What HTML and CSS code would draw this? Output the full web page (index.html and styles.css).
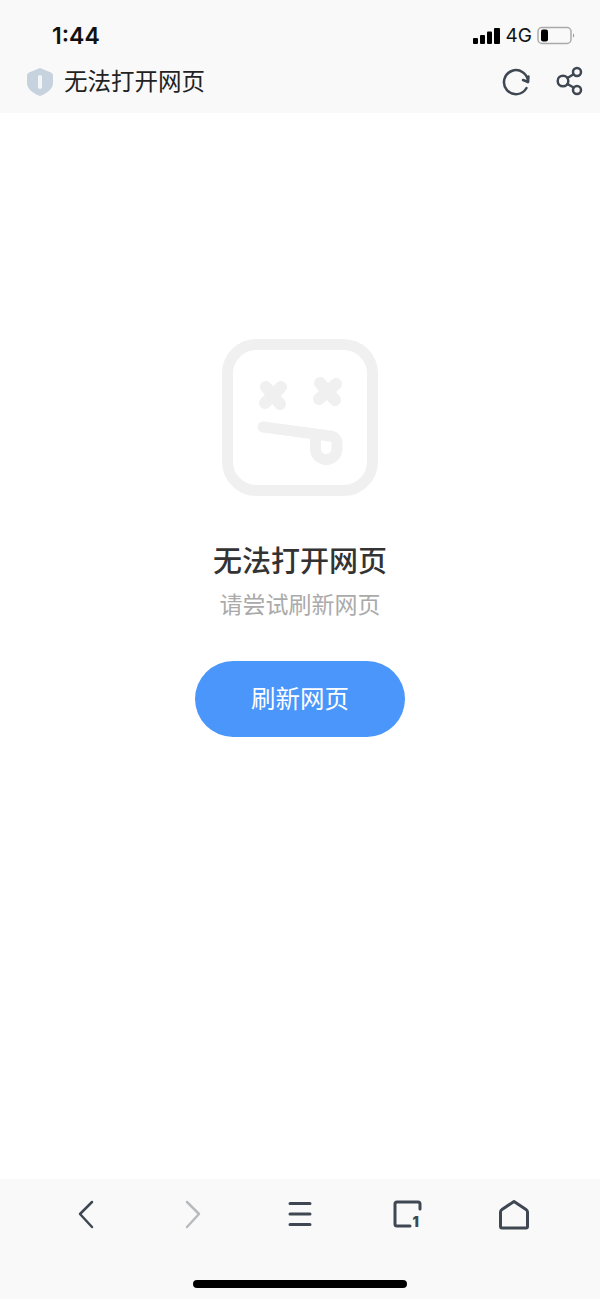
FILE: index.html
```html
<!DOCTYPE html>
<html lang="zh-CN">
<head>
<meta charset="utf-8">
<title>无法打开网页</title>
<link rel="stylesheet" href="styles.css">
</head>
<body>
<div class="page">
  <header class="top">
    <div class="status">
      <span class="time">1:44</span>
      <div class="status-right">
        <svg class="signal" width="27" height="18" viewBox="0 0 27 18"><rect x="0" y="11" width="5" height="6" rx="1"/><rect x="7" y="8" width="5" height="9" rx="1"/><rect x="14" y="4.500" width="5" height="12.500" rx="1"/><rect x="21" y="1" width="6" height="16" rx="1"/></svg>
        <span class="net">4G</span>
        <svg class="battery" width="40" height="20" viewBox="0 0 40 20"><rect x="2" y="1.500" width="33" height="16" rx="4" class="batt-shell"/><rect x="5" y="3.500" width="7" height="12" rx="2" class="batt-fill"/><path d="M37 7.500c1.500.4 1.500 3.600 0 4z" class="batt-tip"/></svg>
      </div>
    </div>
    <div class="nav">
      <div class="nav-left">
        <svg class="shield" width="26" height="28" viewBox="0 0 26 28"><path class="shield-body" d="M13 0 L24 4.500 Q26 5.300 26 7.500 V15 C26 21 20 25.500 13 28 C6 25.500 0 21 0 15 V7.500 Q0 5.300 2 4.500 Z"/><rect class="shield-pill" x="11" y="7" width="4" height="14" rx="2"/></svg>
        <h1 class="nav-title">无法打开网页</h1>
      </div>
      <div class="nav-right">
        <svg class="ico" width="28" height="28" viewBox="0 0 28 28"><path d="M24.500 20 A12 12 0 1 1 26 14"/><path d="M26.500 8.500 L26 14 L21 12"/></svg>
        <svg class="ico" width="28" height="28" viewBox="0 0 28 28"><circle cx="8" cy="13" r="5.300"/><circle cx="22" cy="4" r="4"/><circle cx="22" cy="22" r="4"/><path d="M12.500 10 L18.500 6.300 M12.500 16 L18.500 19.500"/></svg>
      </div>
    </div>
  </header>

  <main class="content">
    <svg class="face" width="156" height="157" viewBox="0 0 156 157">
      <rect x="5.500" y="5.500" width="145" height="146" rx="29"/>
      <path class="eye" d="M44 48 L58 65 M59 48 L43 64"/>
      <path class="eye" d="M98 44 L113 61 M114 45 L97 60"/>
      <path d="M41 88 L108 97 A7 7 0 0 1 115 104 V109.750 A10.750 10.750 0 0 1 93.500 109.750 V96"/>
    </svg>
    <h2 class="title">无法打开网页</h2>
    <p class="sub">请尝试刷新网页</p>
    <button class="retry">刷新网页</button>
  </main>

  <footer class="bottom">
    <div class="tabs">
      <div class="tab"><svg class="ico" width="28" height="28" viewBox="0 0 28 28"><path d="M20 2 L8 14 L20 27"/></svg></div>
      <div class="tab"><svg class="ico off" width="28" height="28" viewBox="0 0 28 28"><path d="M8 2 L20 14 L8 27"/></svg></div>
      <div class="tab"><svg class="ico thick" width="28" height="28" viewBox="0 0 28 28"><path d="M4 3.500 H24 M4 14 H24 M4 24.500 H24"/></svg></div>
      <div class="tab"><svg class="ico thick" width="28" height="28" viewBox="0 0 28 28"><path d="M17 26 H4 Q2 26 2 24 V4 Q2 2 4 2 H25 Q27 2 27 4 V9"/><text x="19.500" y="27" class="tab-num">1</text></svg></div>
      <div class="tab"><svg class="ico thick" width="30" height="30" viewBox="0 0 30 30"><path d="M15 1.500 L27 9.500 Q28.500 10.500 28.500 12 V26.500 Q28.500 28 27 28 H3 Q1.500 28 1.500 26.500 V12 Q1.500 10.500 3 9.500 Z"/></svg></div>
    </div>
    <div class="home-bar"></div>
  </footer>
</div>
</body>
</html>
```
FILE: styles.css
```css
* { box-sizing: border-box; }
html, body { margin: 0; padding: 0; background: #fff; }
body { font-family: "Noto Sans CJK SC", "Noto Sans", sans-serif; }
.page { width: 600px; height: 1299px; display: flex; flex-direction: column; overflow: hidden; }

.top { height: 113px; background: #f9f9f9; flex: none; }
.status { height: 59px; padding: 12px 24px 0 52px; display: flex; align-items: center; justify-content: space-between; }
.time { font-family: Inter, sans-serif; font-weight: 600; font-size: 23px; color: #111; line-height: 44px; }
.status-right { display: flex; align-items: center; }
.signal { fill: #000; margin-right: 6px; }
.net { font-family: Inter, sans-serif; font-size: 19px; color: #111; margin-right: 4px; line-height: 24px; }
.batt-shell { fill: none; stroke: #aaa; stroke-width: 1.500; }
.batt-fill { fill: #000; }
.batt-tip { fill: #999; }

.nav { height: 54px; padding: 0 17px 9px 27px; display: flex; align-items: center; justify-content: space-between; }
.nav-left { display: flex; align-items: center; gap: 11px; }
.shield-body { fill: #c6d3df; }
.shield-pill { fill: #f4f6f8; }
.nav-title { margin: 0; padding-bottom: 4px; font-size: 23.500px; font-weight: 400; color: #222; line-height: 34px; }
.nav-right { display: flex; align-items: center; gap: 25px; }

.ico { fill: none; stroke: #3f4852; stroke-width: 2.500; stroke-linecap: round; stroke-linejoin: round; display: block; overflow: visible; }
.ico.off { stroke: #b8bcc0; }
.ico.thick { stroke-width: 3; }
.tab-num { font-family: Inter, sans-serif; font-weight: 900; font-size: 14px; fill: #3f4852; stroke: none; }

.content { flex: 1; display: flex; flex-direction: column; align-items: center; padding-top: 226px; }
.face { fill: none; stroke: #f0f0f0; stroke-width: 11; stroke-linecap: round; stroke-linejoin: round; }
.face .eye { stroke-width: 12; }
.title { margin: 41px 0 0; font-size: 29px; font-weight: 500; color: #333; line-height: 44px; }
.sub { margin: 0; font-size: 23px; color: #aaa; line-height: 44px; }
.retry { margin-top: 36px; width: 210px; height: 76px; border: 0; border-radius: 38px; background: #4a96fb; color: #fff; font-family: inherit; font-size: 24.500px; padding: 0 0 3px; }

.bottom { height: 120px; background: #f9f9f9; flex: none; display: flex; flex-direction: column; align-items: center; }
.tabs { width: 535px; height: 101px; padding-top: 21px; display: grid; grid-template-columns: repeat(5, 107px); align-items: start; }
.tab { display: flex; justify-content: center; }
.home-bar { width: 214px; height: 8px; border-radius: 4px; background: #000; }
```
